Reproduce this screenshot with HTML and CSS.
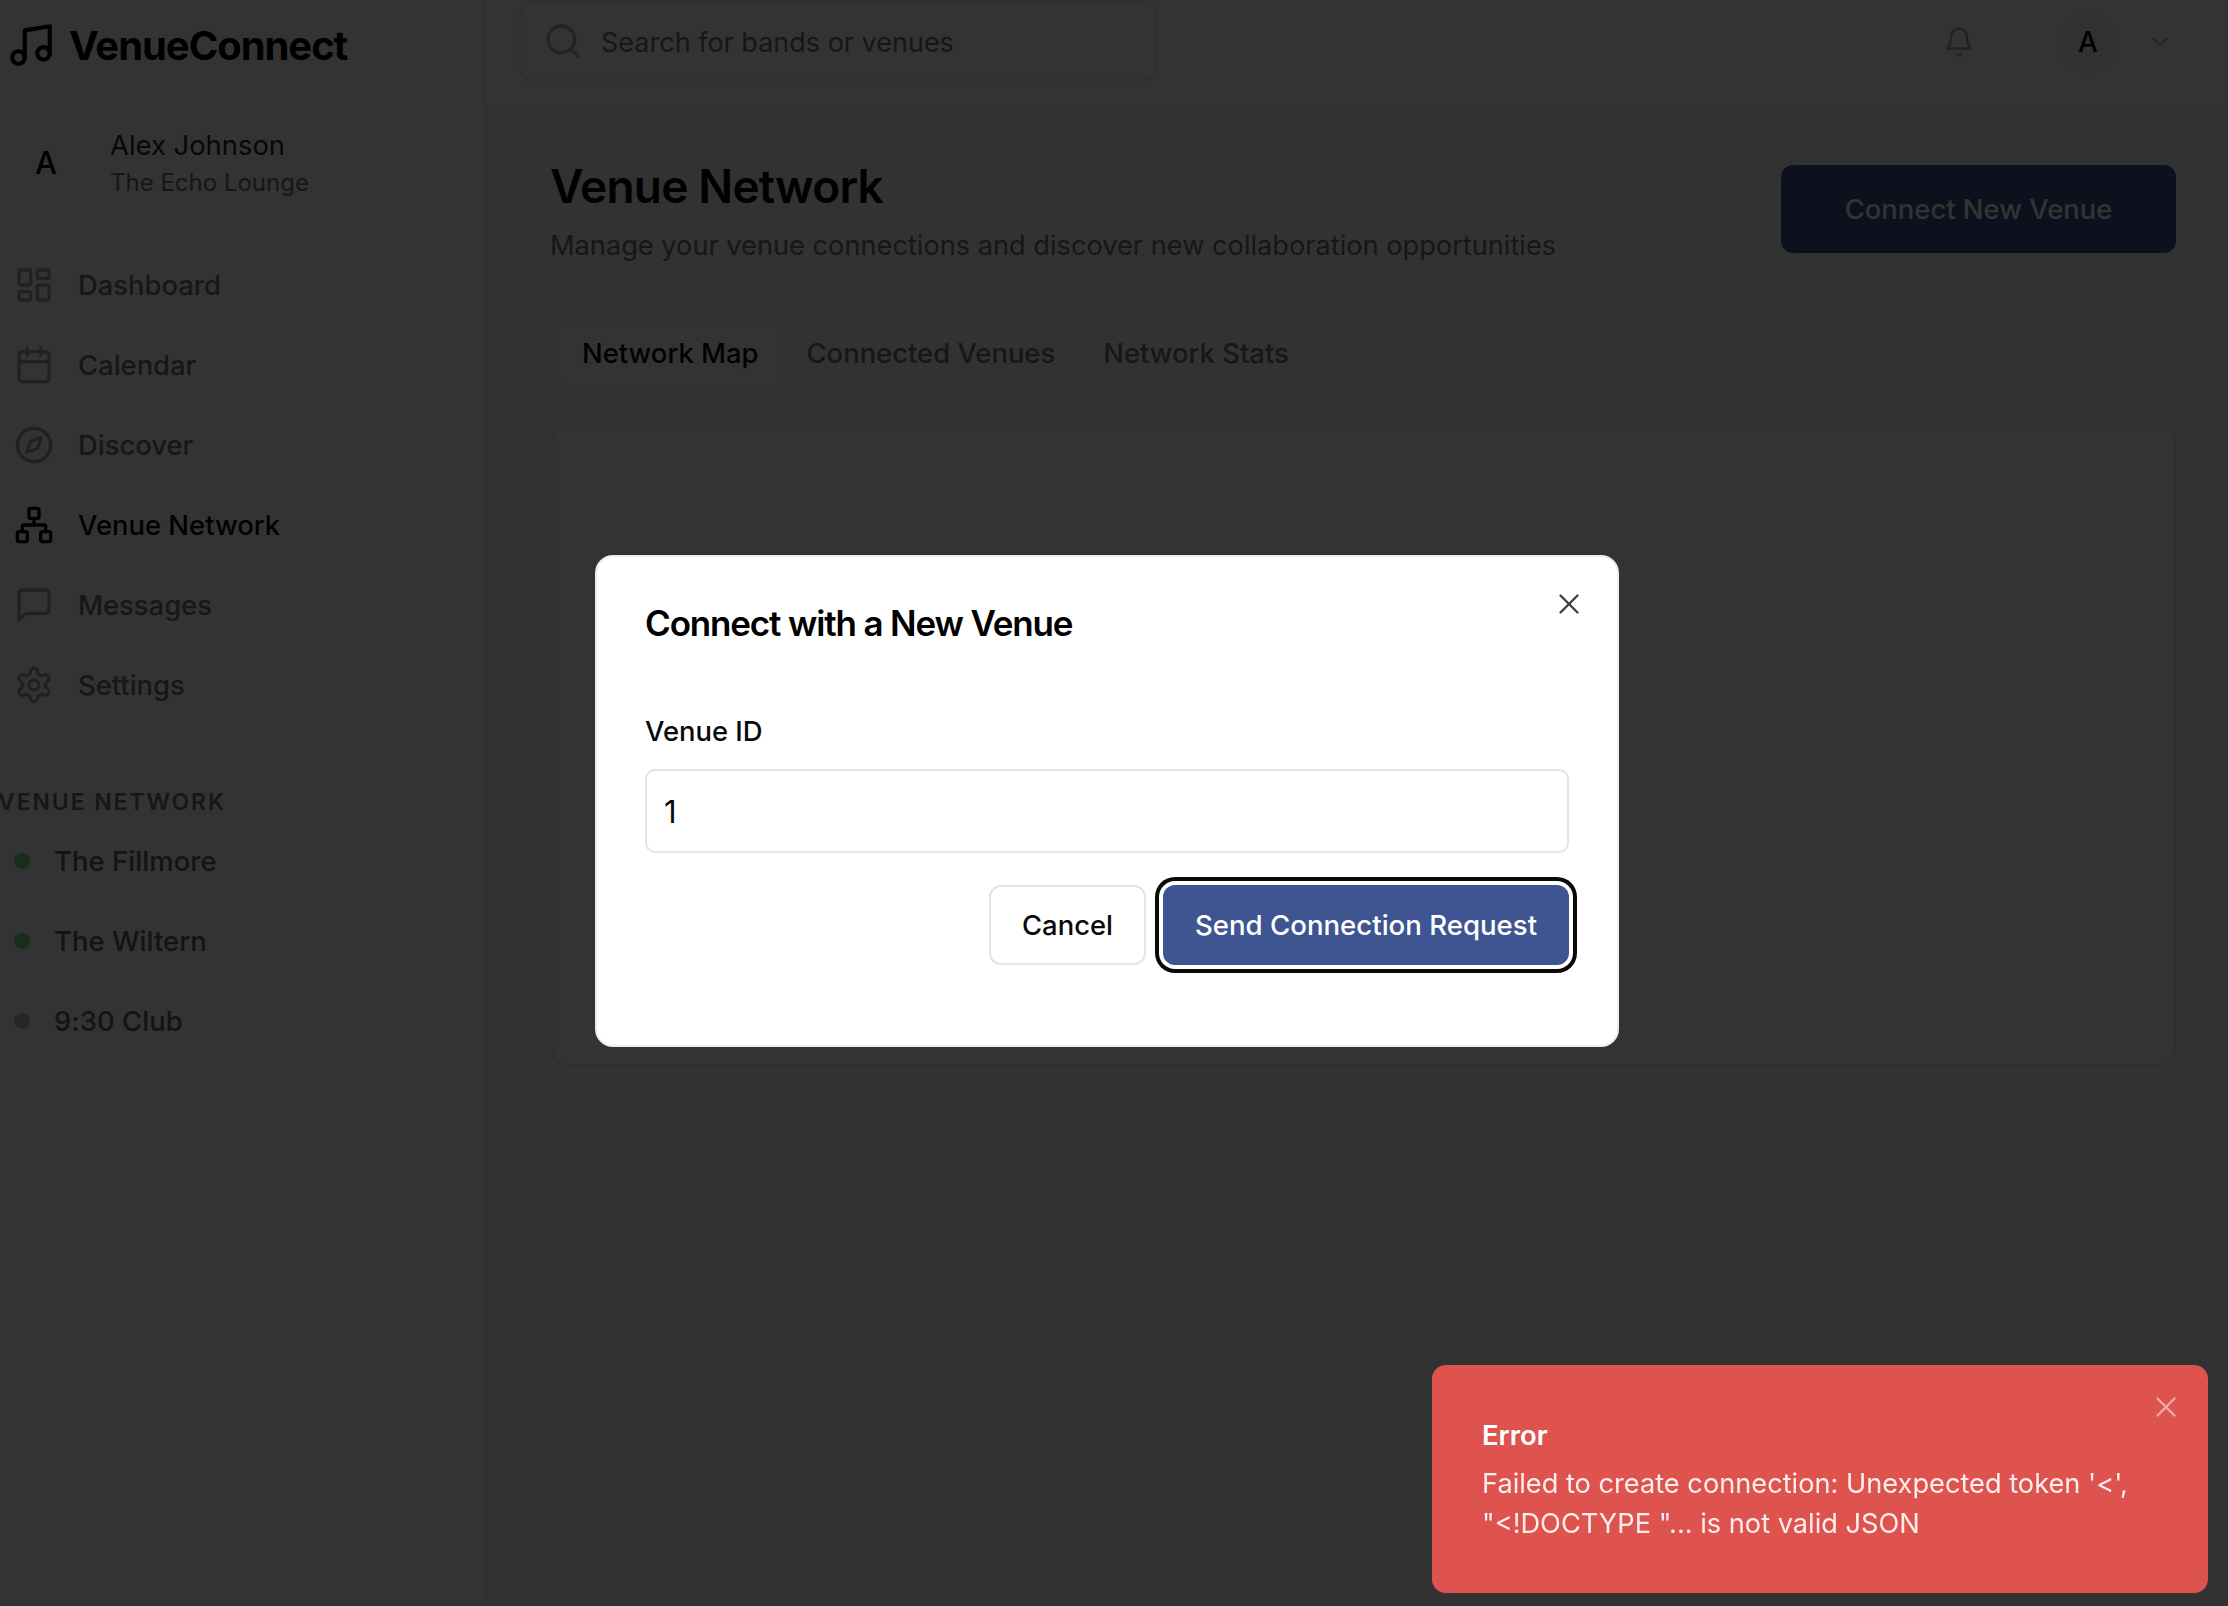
FILE: index.html
```html
<!DOCTYPE html>
<html>
<head>
    <meta charset="utf-8">
    <title>VenueConnect</title>
    <link rel="stylesheet" href="styles.css">
</head>
<body>
    <div class="app">
        <aside class="sidebar">
            <div class="logo">
                <svg class="logo-icon" viewBox="0 0 24 24"><path d="M9 18V5l12-2v13"/><circle cx="6" cy="18" r="3"/><circle cx="18" cy="16" r="3"/></svg>
                <span>VenueConnect</span>
            </div>
            <div class="user">
                <span class="user-avatar">A</span>
                <div class="user-text">
                    <div class="user-name">Alex Johnson</div>
                    <div class="user-venue">The Echo Lounge</div>
                </div>
            </div>
            <nav class="nav">
                <a class="nav-item"><svg viewBox="0 0 24 24"><rect x="3" y="3" width="7" height="9" rx="1"/><rect x="14" y="3" width="7" height="5" rx="1"/><rect x="14" y="12" width="7" height="9" rx="1"/><rect x="3" y="16" width="7" height="5" rx="1"/></svg>Dashboard</a>
                <a class="nav-item"><svg viewBox="0 0 24 24"><path d="M8 2v4"/><path d="M16 2v4"/><rect x="3" y="4" width="18" height="18" rx="2"/><path d="M3 10h18"/></svg>Calendar</a>
                <a class="nav-item"><svg viewBox="0 0 24 24"><circle cx="12" cy="12" r="10"/><polygon points="16.24 7.76 14.12 14.12 7.76 16.24 9.88 9.88"/></svg>Discover</a>
                <a class="nav-item active"><svg viewBox="0 0 24 24"><rect x="16" y="16" width="6" height="6" rx="1"/><rect x="2" y="16" width="6" height="6" rx="1"/><rect x="9" y="2" width="6" height="6" rx="1"/><path d="M5 16v-3a1 1 0 0 1 1-1h12a1 1 0 0 1 1 1v3"/><path d="M12 12V8"/></svg>Venue Network</a>
                <a class="nav-item"><svg viewBox="0 0 24 24"><path d="M21 15a2 2 0 0 1-2 2H7l-4 4V5a2 2 0 0 1 2-2h14a2 2 0 0 1 2 2z"/></svg>Messages</a>
                <a class="nav-item"><svg viewBox="0 0 24 24"><path d="M12.22 2h-.44a2 2 0 0 0-2 2v.18a2 2 0 0 1-1 1.73l-.43.25a2 2 0 0 1-2 0l-.15-.08a2 2 0 0 0-2.73.73l-.22.38a2 2 0 0 0 .73 2.73l.15.1a2 2 0 0 1 1 1.72v.51a2 2 0 0 1-1 1.74l-.15.09a2 2 0 0 0-.73 2.73l.22.38a2 2 0 0 0 2.73.73l.15-.08a2 2 0 0 1 2 0l.43.25a2 2 0 0 1 1 1.73V20a2 2 0 0 0 2 2h.44a2 2 0 0 0 2-2v-.18a2 2 0 0 1 1-1.73l.43-.25a2 2 0 0 1 2 0l.15.08a2 2 0 0 0 2.73-.73l.22-.39a2 2 0 0 0-.73-2.73l-.15-.08a2 2 0 0 1-1-1.74v-.5a2 2 0 0 1 1-1.74l.15-.09a2 2 0 0 0 .73-2.73l-.22-.38a2 2 0 0 0-2.73-.73l-.15.08a2 2 0 0 1-2 0l-.43-.25a2 2 0 0 1-1-1.73V4a2 2 0 0 0-2-2z"/><circle cx="12" cy="12" r="3"/></svg>Settings</a>
            </nav>
            <div class="network-title">VENUE NETWORK</div>
            <div class="network-list">
                <div class="network-item"><span class="dot online"></span>The Fillmore</div>
                <div class="network-item"><span class="dot online"></span>The Wiltern</div>
                <div class="network-item"><span class="dot"></span>9:30 Club</div>
            </div>
        </aside>

        <div class="main">
            <header class="topbar">
                <div class="search">
                    <svg viewBox="0 0 24 24"><circle cx="11" cy="11" r="8"/><path d="m21 21-4.3-4.3"/></svg>
                    <span>Search for bands or venues</span>
                </div>
                <div class="topbar-right">
                    <svg class="bell" viewBox="0 0 24 24"><path d="M6 8a6 6 0 0 1 12 0c0 7 3 9 3 9H3s3-2 3-9"/><path d="M10.3 21a1.94 1.94 0 0 0 3.4 0"/></svg>
                    <span class="top-avatar">A</span>
                    <svg class="chevron" viewBox="0 0 24 24"><path d="m6 9 6 6 6-6"/></svg>
                </div>
            </header>

            <main class="content">
                <div class="page-head">
                    <div>
                        <h1>Venue Network</h1>
                        <p>Manage your venue connections and discover new collaboration opportunities</p>
                    </div>
                    <button class="btn-primary">Connect New Venue</button>
                </div>
                <div class="tabs">
                    <span class="tab active">Network Map</span>
                    <span class="tab">Connected Venues</span>
                    <span class="tab">Network Stats</span>
                </div>
                <div class="map-card"></div>
            </main>
        </div>
    </div>

    <div class="overlay"></div>

    <div class="modal">
        <svg class="modal-close" viewBox="0 0 24 24"><path d="M18 6 6 18"/><path d="m6 6 12 12"/></svg>
        <h2>Connect with a New Venue</h2>
        <label class="field-label">Venue ID</label>
        <div class="input">1</div>
        <div class="modal-actions">
            <button class="btn-cancel">Cancel</button>
            <button class="btn-send">Send Connection Request</button>
        </div>
    </div>

    <div class="toast">
        <svg class="toast-close" viewBox="0 0 24 24"><path d="M18 6 6 18"/><path d="m6 6 12 12"/></svg>
        <div class="toast-title">Error</div>
        <div class="toast-text">Failed to create connection: Unexpected token '&lt;',<br>"&lt;!DOCTYPE "... is not valid JSON</div>
    </div>
</body>
</html>
```

FILE: styles.css
```css
* {
    box-sizing: border-box;
}
html, body {
    margin: 0;
    height: 100%;
    overflow: hidden;
}
body {
    font-family: Inter, "Liberation Sans", sans-serif;
    color: #09090b;
    background: #f8f8f8;
}
svg {
    fill: none;
    stroke: currentColor;
    stroke-width: 2;
    stroke-linecap: round;
    stroke-linejoin: round;
    flex: none;
}
button {
    font-family: inherit;
    border: 0;
}

.app {
    display: flex;
    height: 100%;
}

/* sidebar */
.sidebar {
    width: 486px;
    flex: none;
    background: #fff;
    border-right: 2px solid #e8e8e8;
}
.logo {
    display: flex;
    align-items: center;
    gap: 13px;
    height: 90px;
    padding-left: 6px;
    font-size: 40px;
    font-weight: 700;
    letter-spacing: -1.05px;
    color: #000;
}
.logo-icon {
    width: 50px;
    height: 50px;
}
.user {
    display: flex;
    align-items: center;
    height: 144px;
}
.user-avatar {
    width: 110px;
    padding-left: 35px;
    font-size: 31px;
    font-weight: 500;
}
.user-text {
    padding-top: 3px;
}
.user-name {
    font-size: 27.4px;
    line-height: 36px;
    color: #1f2937;
}
.user-venue {
    margin-top: 2px;
    font-size: 24px;
    line-height: 36px;
    color: #6b7280;
}
.nav {
    display: flex;
    flex-direction: column;
    margin-top: 11px;
}
.nav-item {
    display: flex;
    align-items: center;
    gap: 24px;
    height: 80px;
    padding-left: 14px;
    font-size: 27.4px;
    font-weight: 500;
    color: #6b7280;
}
.nav-item svg {
    width: 40px;
    height: 40px;
    color: #a0a6b0;
}
.nav-item.active {
    color: #09090b;
}
.nav-item.active svg {
    color: #09090b;
}
.network-title {
    margin: 61px 0 0 -2px;
    height: 32px;
    line-height: 32px;
    font-size: 23px;
    font-weight: 600;
    letter-spacing: 1.9px;
    color: #6b7280;
}
.network-list {
    margin-top: 3px;
}
.network-item {
    display: flex;
    align-items: center;
    gap: 24px;
    height: 80px;
    padding-left: 14px;
    font-size: 27.4px;
    font-weight: 500;
    letter-spacing: 0.08px;
    color: #5b6370;
}
.dot {
    width: 16px;
    height: 16px;
    border-radius: 50%;
    background: #b8bcc6;
}
.dot.online {
    background: #70e888;
}

/* top bar */
.main {
    flex: 1;
    min-width: 0;
}
.topbar {
    display: flex;
    align-items: flex-start;
    justify-content: space-between;
    height: 106px;
    padding: 1px 54px 0 33px;
    background: #fff;
    border-bottom: 2px solid #eeeeee;
}
.search {
    display: flex;
    align-items: center;
    gap: 18px;
    width: 639px;
    height: 80px;
    padding: 2px 0 0 22px;
    border: 2px solid #ececec;
    border-radius: 12px;
    font-size: 27px;
    color: #6b7280;
}
.search svg {
    width: 40px;
    height: 40px;
    margin-top: -2px;
    color: #a8aeb8;
}
.topbar-right {
    display: flex;
    align-items: center;
    height: 82px;
}
.bell {
    width: 32px;
    height: 32px;
    margin-right: 82px;
    color: #a8aeb8;
}
.top-avatar {
    display: flex;
    align-items: center;
    justify-content: center;
    width: 62px;
    height: 62px;
    margin-right: 27px;
    border-radius: 50%;
    background: #f4f4f5;
    font-size: 28px;
    font-weight: 500;
}
.chevron {
    width: 28px;
    height: 28px;
    color: #a8aeb8;
}

/* page */
.content {
    padding: 56px 52px 0 64px;
}
.page-head {
    display: flex;
    justify-content: space-between;
    align-items: flex-start;
}
h1 {
    margin: 0;
    font-size: 46px;
    line-height: 48px;
    font-weight: 600;
    letter-spacing: -0.8px;
}
.page-head p {
    margin: 16px 0 0;
    font-size: 27.2px;
    line-height: 40px;
    color: #6b7280;
}
.btn-primary {
    width: 395px;
    height: 88px;
    margin-top: 3px;
    padding-top: 1px;
    border-radius: 12px;
    background: #3f5591;
    color: #fff;
    font-size: 27.4px;
    font-weight: 500;
}
.tabs {
    display: flex;
    margin: 56px 0 0 8px;
}
.tab {
    display: flex;
    align-items: center;
    height: 63px;
    padding: 0 24px 2px;
    font-size: 27.4px;
    font-weight: 500;
    color: #6b7280;
}
.tab.active {
    background: #fff;
    border-radius: 10px;
    color: #09090b;
}
.map-card {
    height: 640px;
    margin: 41px 0 0 1px;
    background: #fff;
    border: 2px solid #e8e8e8;
    border-radius: 16px;
}

/* dialog layer */
.overlay {
    position: fixed;
    inset: 0;
    background: rgba(0, 0, 0, 0.8);
}
.modal {
    position: fixed;
    left: 595px;
    top: 555px;
    width: 1024px;
    height: 492px;
    padding: 48px;
    background: #fff;
    border: 2px solid #ececec;
    border-radius: 18px;
}
.modal h2 {
    margin: 0;
    font-size: 35px;
    line-height: 36px;
    font-weight: 600;
    letter-spacing: -1.15px;
    color: #000;
}
.modal-close {
    position: absolute;
    top: 30px;
    right: 31px;
    width: 34px;
    height: 34px;
    stroke-width: 1.7;
    color: #3f3f46;
}
.field-label {
    display: block;
    margin-top: 72px;
    font-size: 27.4px;
    line-height: 36px;
    font-weight: 500;
}
.input {
    display: flex;
    align-items: center;
    height: 84px;
    margin-top: 20px;
    padding-left: 17px;
    border: 2px solid #e4e4e7;
    border-radius: 10px;
    font-size: 31px;
}
.modal-actions {
    display: flex;
    justify-content: flex-end;
    gap: 17px;
    margin-top: 32px;
}
.btn-cancel {
    width: 157px;
    height: 80px;
    background: #fff;
    border: 2px solid #e4e4e7;
    border-radius: 12px;
    font-size: 27.4px;
    font-weight: 500;
    color: #09090b;
}
.btn-send {
    width: 406px;
    height: 80px;
    background: #3f5591;
    border-radius: 12px;
    box-shadow: 0 0 0 4px #fff, 0 0 0 8px #0a0a0a;
    color: #fff;
    font-size: 27.6px;
    font-weight: 500;
}

/* toast */
.toast {
    position: fixed;
    left: 1432px;
    top: 1365px;
    width: 776px;
    height: 228px;
    padding: 50px 50px;
    background: #de534e;
    border-radius: 14px;
    color: #fff;
}
.toast-title {
    font-size: 27.4px;
    line-height: 40px;
    font-weight: 600;
}
.toast-text {
    margin-top: 9px;
    font-size: 27.2px;
    line-height: 40px;
    opacity: 0.9;
}
.toast-close {
    position: absolute;
    top: 25px;
    right: 25px;
    width: 34px;
    height: 34px;
    stroke-width: 1.7;
    opacity: 0.5;
}
```
